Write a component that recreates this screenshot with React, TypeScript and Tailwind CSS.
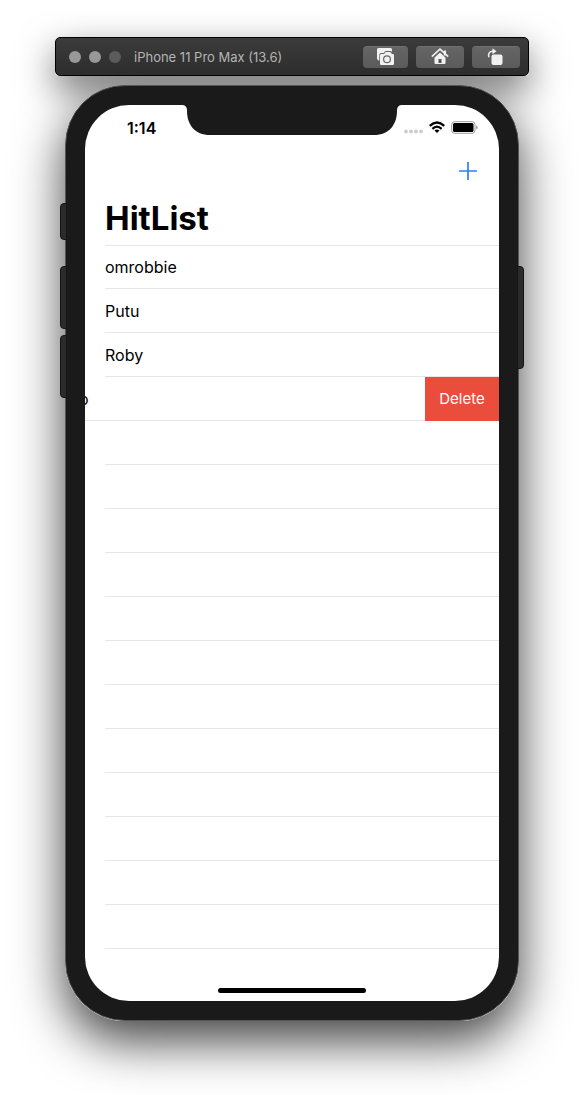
import React from "react";

const names = ["omrobbie", "Putu", "Roby"];
const emptyRows = Array.from({ length: 12 }, (_, i) => i);

function ToolbarButton({ label, wide, children }: { label: string; wide?: boolean; children: React.ReactNode }) {
  return (
    <button
      type="button"
      aria-label={label}
      className={`flex h-[22px] items-center justify-center rounded border-t border-[#707070] bg-linear-to-b from-[#656565] to-[#5b5b5b] ${wide ? "w-12" : "w-[45px]"}`}
    >
      {children}
    </button>
  );
}

function CameraIcon() {
  return (
    <svg width="18" height="18" viewBox="0 0 18 18" aria-hidden="true">
      <path d="M1.500 0h12A1.500 1.500 0 0 1 15 1.500V4l-1-1H8.500L6.700 5H4.200Q2.300 5 2.300 7V12.500H1.500L0 11V1.500A1.500 1.500 0 0 1 1.500 0Z" fill="#f1f1f1" />
      <path d="M4.300 6H7l1.700-2h4.600L15 6h.7A1.300 1.300 0 0 1 17 7.300v8.400a1.300 1.300 0 0 1-1.300 1.300H4.300A1.300 1.300 0 0 1 3 15.700V7.300A1.300 1.300 0 0 1 4.300 6Z" fill="#f1f1f1" />
      <circle cx="10" cy="11.200" r="3.400" fill="#f1f1f1" stroke="#666" strokeWidth="1.200" />
    </svg>
  );
}

function HomeIcon() {
  return (
    <svg width="18" height="18" viewBox="0 0 18 18" aria-hidden="true">
      <path d="M3.500 9.500 9 4.500l5.500 5V15a1 1 0 0 1-1 1h-9a1 1 0 0 1-1-1Z" fill="#f1f1f1" />
      <path d="M1 9.200 9 2.200l8 7" fill="none" stroke="#606060" strokeWidth="2.600" />
      <path d="M12.800 2.500h2.200v5h-2.200Z" fill="#f1f1f1" />
      <path d="M.8 8.600 9 1.200l8.200 7.400" fill="none" stroke="#f1f1f1" strokeWidth="1.600" />
      <path d="M7.500 11h3v4h-3Z" fill="#555" />
    </svg>
  );
}

function RotateIcon() {
  return (
    <svg width="18" height="18" viewBox="0 0 18 18" aria-hidden="true">
      <path d="M2 9.200C.6 6 2.300 3.300 6 3.300" fill="none" stroke="#f1f1f1" strokeWidth="1.500" />
      <path d="M5.500.3 9.500 3.300 5.500 6.300Z" fill="#f1f1f1" />
      <rect x="4.500" y="6.500" width="11" height="10.500" rx="2" fill="#f1f1f1" />
    </svg>
  );
}

function Toolbar() {
  return (
    <div className="relative">
      <div className="absolute inset-0 -z-10 rounded shadow-[0_14px_36px_rgba(0,0,0,0.55)]" />
      <header className="flex h-[39px] items-center rounded-[5px] border border-black bg-linear-to-b from-[#3b3b3b] to-[#2d2d2d] pl-[13px] pr-2">
        <div className="flex gap-2">
          <button type="button" aria-label="Close" className="size-3 rounded-full bg-[#989898]" />
          <button type="button" aria-label="Minimize" className="size-3 rounded-full bg-[#989898]" />
          <button type="button" aria-label="Zoom" disabled className="size-3 rounded-full bg-[#5b5b5b]" />
        </div>
        <p className="ml-[13px] flex-1 whitespace-nowrap text-[13px] leading-4 text-[#b4b4b4]">iPhone 11 Pro Max (13.6)</p>
        <div className="flex gap-2">
          <ToolbarButton label="Screenshot"><CameraIcon /></ToolbarButton>
          <ToolbarButton label="Home" wide><HomeIcon /></ToolbarButton>
          <ToolbarButton label="Rotate" wide><RotateIcon /></ToolbarButton>
        </div>
      </header>
    </div>
  );
}

function StatusBar() {
  return (
    <div className="grid h-11 grid-cols-[1fr_auto_1fr] items-start">
      <div className="pl-[42px] pt-[13px] text-base leading-5 font-semibold">1:14</div>
      <svg width="220" height="30" viewBox="0 0 220 30" aria-hidden="true">
        <path d="M0 0Q5 0 5 5.500C5 20 13 30 28 30H192C207 30 215 20 215 5.500Q215 0 220 0Z" fill="#1a1a1a" />
      </svg>
      <div className="flex items-center justify-end gap-1.5 pr-[21px] pt-4">
        <svg width="19" height="13" viewBox="0 0 19 13" aria-hidden="true" fill="#cdcdcd">
          <circle cx="2" cy="10.500" r="1.900" />
          <circle cx="7" cy="10.500" r="1.900" />
          <circle cx="12" cy="10.500" r="1.900" />
          <circle cx="17" cy="10.500" r="1.900" />
        </svg>
        <svg width="16" height="13" viewBox="0 0 16 13" aria-hidden="true">
          <g fill="none" stroke="#000" strokeWidth="2.300">
            <path d="M.8 4.900Q8-1.800 15.200 4.900" />
            <path d="M3.400 7.800Q8 3.500 12.600 7.800" />
          </g>
          <path d="M5.500 9.500Q8 7.500 10.500 9.500L8 12Z" />
        </svg>
        <svg width="27" height="13" viewBox="0 0 27 13" aria-hidden="true">
          <rect x=".7" y=".7" width="23.300" height="11.600" rx="3" fill="none" stroke="#999" />
          <rect x="2" y="2.100" width="20.500" height="8.800" rx="1.500" />
          <path d="M25.200 4.500q1.500.6 1.500 2t-1.500 2Z" fill="#999" />
        </svg>
      </div>
    </div>
  );
}

function Screen() {
  return (
    <main className="overflow-hidden rounded-[44px] bg-white text-black">
      <StatusBar />
      <nav className="flex h-11 items-center justify-end pr-[21px]">
        <button type="button" aria-label="Add name">
          <svg width="20" height="20" viewBox="0 0 20 20" aria-hidden="true">
            <path d="M10 1v18M1 10h18" stroke="#2c7ff6" strokeWidth="1.700" />
          </svg>
        </button>
      </nav>
      <h1 className="h-[52px] pl-5 text-[33px] leading-[50px] font-bold">HitList</h1>
      <ul className="text-base">
        {names.map((name, i) => (
          <li key={name} className={`ml-5 flex h-11 items-center border-b border-[#e6e6e8] ${i === 0 ? "border-t" : ""}`}>
            {name}
          </li>
        ))}
        <li className="flex h-11 items-center justify-between bg-linear-to-t from-[#e6e6e8] from-[1px] to-white to-[1px]">
          <span className="-ml-1.5">o</span>
          <button type="button" className="h-full w-[74px] bg-[#eb4d3d] text-[15px] text-white">Delete</button>
        </li>
        {emptyRows.map((i) => (
          <li key={i} className="ml-5 h-11 border-b border-[#e6e6e8]" />
        ))}
      </ul>
      <div className="flex h-[52px] items-end justify-center pb-2">
        <div className="h-[5px] w-[148px] rounded-full bg-black" />
      </div>
    </main>
  );
}

function Phone() {
  return (
    <div className="relative mx-2.5 mt-[9px]">
      <div className="absolute inset-0 -z-10 rounded-[60px] shadow-[0_20px_50px_rgba(0,0,0,0.75)]" />
      <div className="absolute -left-[5px] top-[118px] h-[37px] w-[7px] rounded-l border border-[#151515] bg-[#2b2b2b]" />
      <div className="absolute -left-[5px] top-[181px] h-[63px] w-[7px] rounded-l border border-[#151515] bg-[#2b2b2b]" />
      <div className="absolute -left-[5px] top-[250px] h-[63px] w-[7px] rounded-l border border-[#151515] bg-[#2b2b2b]" />
      <div className="absolute -right-[5px] top-[181px] h-[103px] w-[7px] rounded-r border border-[#151515] bg-[#2b2b2b]" />
      <div className="rounded-[60px] border border-[#555] bg-[#1a1a1a] p-[19px]">
        <Screen />
      </div>
    </div>
  );
}

export default function App() {
  return (
    <div className="isolate min-h-screen overflow-hidden bg-white px-[55px] pt-[37px] pb-[74px] font-['Inter',sans-serif]">
      <Toolbar />
      <Phone />
    </div>
  );
}
